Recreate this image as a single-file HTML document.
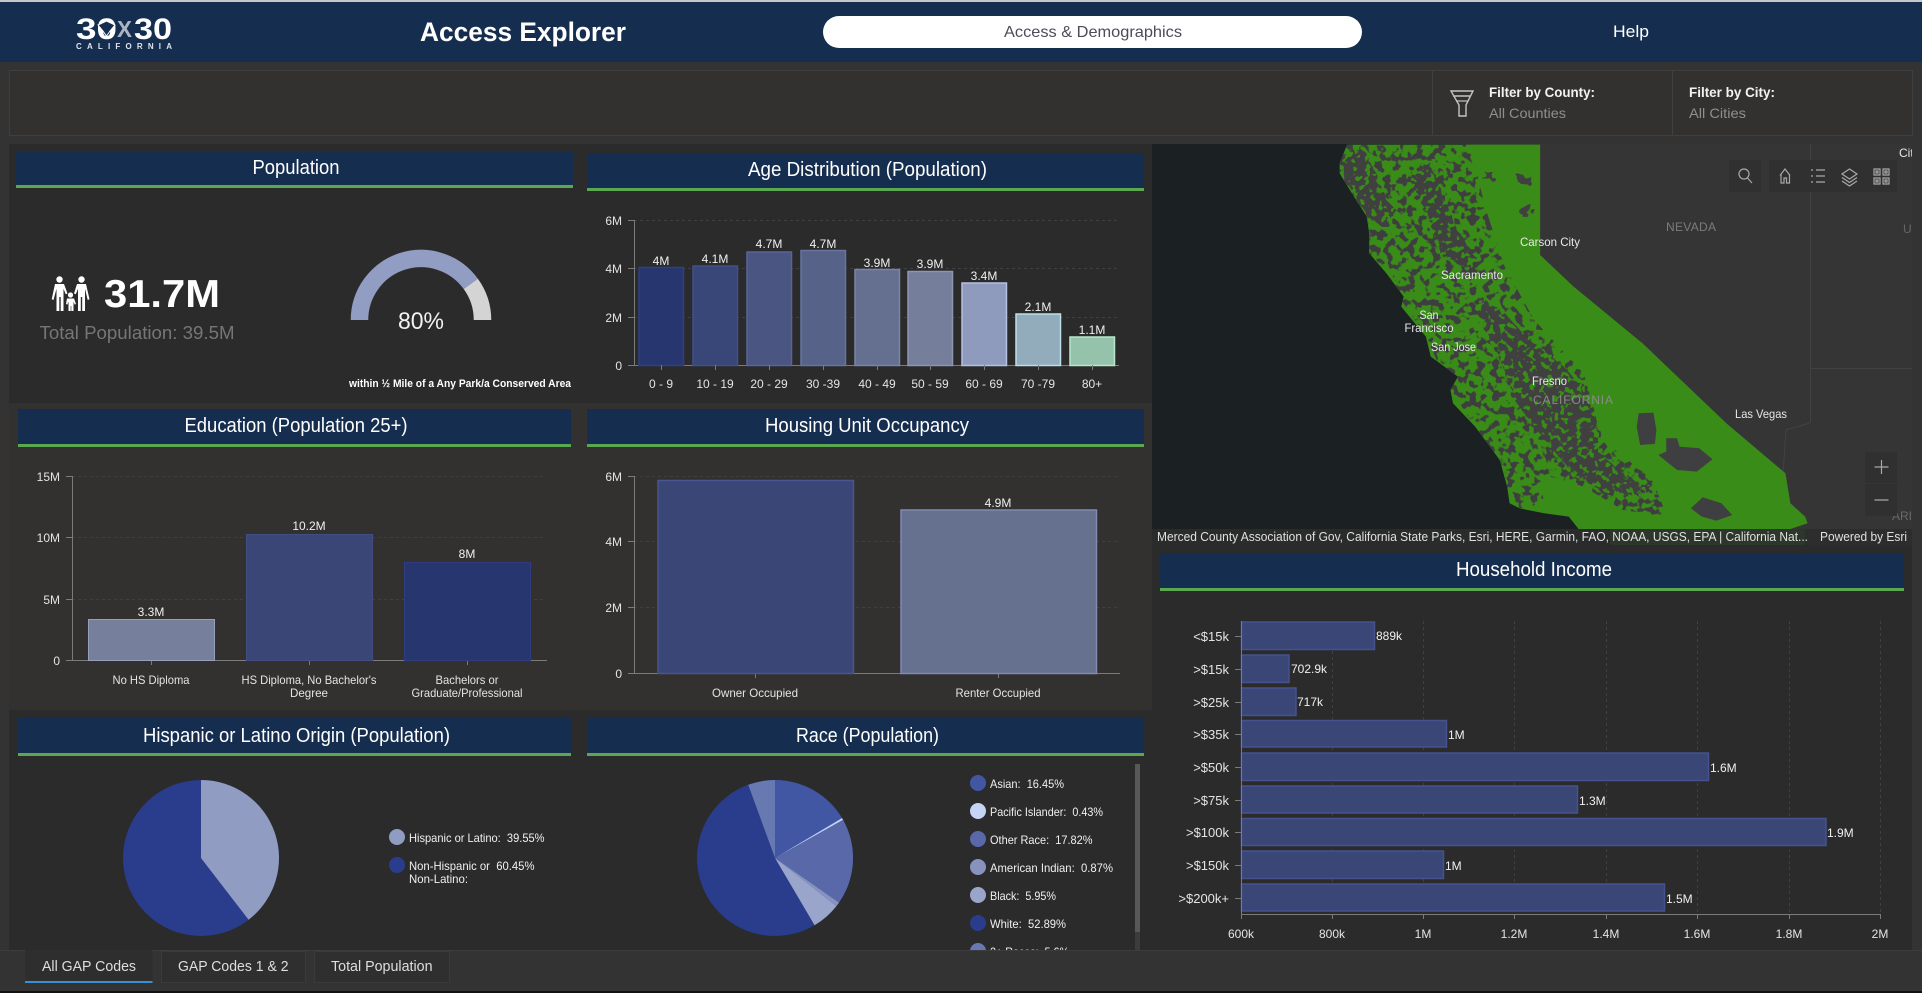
<!DOCTYPE html>
<html lang="en"><head><meta charset="utf-8"><title>Access Explorer</title>
<style>
html,body{margin:0;padding:0;background:#333;width:1922px;height:993px;overflow:hidden}
svg{display:block}
text{font-family:"Liberation Sans",sans-serif;fill:#eee}
.ttl{font-size:20px;fill:#fff;text-anchor:middle}
.v{font-size:12px;text-anchor:middle;fill:#f0f0f0}
.a{font-size:12px;text-anchor:end;fill:#e4e4e4}
.x{font-size:12px;text-anchor:middle;fill:#e4e4e4}
.lg{font-size:12px;fill:#f0f0f0}
.ml{font-size:12px;fill:#e8e8e8}
.g{stroke:#404040;stroke-width:1;stroke-dasharray:3 3;fill:none}
.ax{stroke:#7b7b7b;stroke-width:1;fill:none}
.ic{stroke:#a8a8a8;stroke-width:1.2;fill:none}
.tab{font-size:14.5px;fill:#dedede}
</style></head><body>
<svg xmlns="http://www.w3.org/2000/svg" width="1922" height="993" viewBox="0 0 1922 993">
<defs>
<filter id="sp" x="0" y="0" width="100%" height="100%" color-interpolation-filters="sRGB">
<feTurbulence type="fractalNoise" baseFrequency=".13" numOctaves="2" seed="7"/>
<feColorMatrix values="0 0 0 0 .243 0 0 0 0 .243 0 0 0 0 .25 14 0 0 0 -7.200"/>
</filter>
<filter id="gs" x="0" y="0" width="100%" height="100%" color-interpolation-filters="sRGB">
<feTurbulence type="fractalNoise" baseFrequency=".17" numOctaves="2" seed="11"/>
<feColorMatrix values="0 0 0 0 .227 0 0 0 0 .549 0 0 0 0 .094 14 0 0 0 -7.800"/>
</filter>
<filter id="dp" x="-5%" y="-5%" width="110%" height="110%">
<feTurbulence type="fractalNoise" baseFrequency=".14" numOctaves="2" seed="3" result="n"/>
<feDisplacementMap in="SourceGraphic" in2="n" scale="12"/>
</filter>
<clipPath id="ca"><polygon transform="translate(1150 140) scale(.4926 .3333)" points="400,14 792,14 792,345 860,440 1000,610 1170,850 1290,1000 1300,1090 1330,1130 1335,1150 1300,1167 870,1167 850,1130 800,1120 750,1105 730,1090 725,1040 710,960 660,860 615,790 610,750 625,710 570,650 560,590 510,500 515,470 480,400 445,340 445,280 440,230 410,160 385,100 385,70"/></clipPath>
<clipPath id="spk"><polygon transform="translate(1150 140) scale(.4926 .3333)" points="385,14 650,14 680,200 720,380 780,540 880,700 920,900 1020,1020 1050,1130 960,1110 880,1040 790,1000 800,1090 750,1105 725,1040 660,860 610,750 560,590 510,480 445,340 385,100"/></clipPath>
<clipPath id="dense">
<polygon transform="translate(1150 140) scale(.4926 .3333)" points="525,60 590,50 630,260 670,360 640,390 590,350 560,240 535,170"/>
<polygon transform="translate(1150 140) scale(.4926 .3333)" points="670,470 730,510 780,600 850,680 890,750 920,860 915,930 970,1000 1020,1040 1010,1070 920,1070 850,1000 790,900 730,780 700,660 660,530"/>
<polygon transform="translate(1150 140) scale(.4926 .3333)" points="385,70 430,10 455,60 490,180 510,210 470,270 430,230 390,130"/>
</clipPath>
<clipPath id="raceclip"><rect x="960" y="764" width="170" height="186"/></clipPath>
</defs>

<rect width="1922" height="993" fill="#333"/>
<!-- header -->
<rect width="1922" height="2" fill="#c8c8c8"/>
<rect y="2" width="1922" height="60" fill="#152e50"/>
<text x="76" y="39" font-size="30" font-weight="700" style="fill:#fff" textLength="41" lengthAdjust="spacingAndGlyphs">30</text>
<path d="M98 25 L106.500 21 L115 25 L110 31 L106.500 36 L103 31Z" fill="#152e50" stroke="#fff" stroke-width="1"/>
<text x="117" y="37" font-size="23" font-weight="700" style="fill:#aab4c2" textLength="15" lengthAdjust="spacingAndGlyphs">X</text>
<text x="134" y="39" font-size="30" font-weight="700" style="fill:#fff" textLength="38" lengthAdjust="spacingAndGlyphs">30</text>
<text x="76" y="49" font-size="8" font-weight="700" style="fill:#dfe4ea" textLength="96">CALIFORNIA</text>
<text x="420" y="41" font-size="27" font-weight="700" style="fill:#fff" textLength="206" lengthAdjust="spacingAndGlyphs">Access Explorer</text>
<rect x="823" y="16" width="539" height="32" rx="16" fill="#fff"/>
<text x="1004" y="37" font-size="16" style="fill:#4c4c5a" textLength="178" lengthAdjust="spacingAndGlyphs">Access &amp; Demographics</text>
<text x="1613" y="37" font-size="16.500" style="fill:#fff" textLength="36" lengthAdjust="spacingAndGlyphs">Help</text>

<!-- filter bar -->
<rect x="9.500" y="70.500" width="1903" height="65" fill="#323130" stroke="#3f3f3f"/>
<path d="M1432.500 71V135M1672.500 71V135" stroke="#404040"/>
<path d="M1451 91H1473L1466 105V116H1459V105ZM1453 96H1471" fill="none" stroke="#c4c4c4" stroke-width="1.400"/>
<path d="M1456 101H1468" stroke="#c4c4c4" stroke-width="1.200"/>
<text x="1489" y="97" font-size="14" font-weight="700" style="fill:#f2f2f2" textLength="106" lengthAdjust="spacingAndGlyphs">Filter by County:</text>
<text x="1489" y="118" font-size="14" style="fill:#8f8f8f" textLength="77" lengthAdjust="spacingAndGlyphs">All Counties</text>
<text x="1689" y="97" font-size="14" font-weight="700" style="fill:#f2f2f2" textLength="86" lengthAdjust="spacingAndGlyphs">Filter by City:</text>
<text x="1689" y="118" font-size="14" style="fill:#8f8f8f" textLength="57" lengthAdjust="spacingAndGlyphs">All Cities</text>

<!-- panels -->
<rect x="9" y="144" width="1143" height="259" fill="#2b2b2b"/>
<rect x="9" y="403" width="1143" height="307" fill="#323130"/>
<rect x="9" y="710" width="1143" height="240" fill="#2b2b2b"/>
<rect x="1152" y="545" width="760" height="405" fill="#2b2b2b"/>

<!-- Population -->
<rect x="16" y="151" width="557" height="34" fill="#152e50"/><rect x="16" y="185" width="557" height="3" fill="#5aa850"/>
<text class="ttl" x="296" y="174" textLength="87" lengthAdjust="spacingAndGlyphs">Population</text>
<g fill="#fff">
<circle cx="59.500" cy="279.500" r="3.200"/><circle cx="81.500" cy="279.500" r="3.200"/><circle cx="70.500" cy="295" r="2.600"/>
<path d="M55 284h9l3.500 9.500-1.800.8-2.200-5.500V311h-2.800V297h-1.400v14h-2.800V288.800L53.500 300l-1.800-.8Z"/>
<path d="M77 284h9l3.500 15.200-1.800.8-2.700-11.200V311h-2.800V297h-1.400v14h-2.800V288.800l-2.200 5.500-1.800-.8Z"/>
<path d="M67 298.500h7l2 5.500-1.300.6-1.200-3V311h-2.200v-5h-.6v5h-2.200V301.600l-1.200 3-1.300-.6Z"/>
</g>
<text x="104" y="307" font-size="39" font-weight="700" style="fill:#fff" textLength="116" lengthAdjust="spacingAndGlyphs">31.7M</text>
<text x="39.500" y="339" font-size="18" style="fill:#767676" textLength="195" lengthAdjust="spacingAndGlyphs">Total Population: 39.5M</text>
<path d="M359.500 320A61.500 61.500 0 0 1 470.800 283.900" fill="none" stroke="#929dc4" stroke-width="17.500"/>
<path d="M470.800 283.900A61.500 61.500 0 0 1 482.500 320" fill="none" stroke="#d4d4d4" stroke-width="17.500"/>
<text x="398" y="329" font-size="24" style="fill:#f2f2f2" textLength="46" lengthAdjust="spacingAndGlyphs">80%</text>
<text x="349" y="387" font-size="11" font-weight="700" style="fill:#fff" textLength="222" lengthAdjust="spacingAndGlyphs">within ½ Mile of a Any Park/a Conserved Area</text>

<!-- Age -->
<rect x="587" y="153" width="557" height="35" fill="#152e50"/><rect x="587" y="188" width="557" height="3" fill="#5aa850"/>
<text class="ttl" x="867.500" y="176" textLength="239" lengthAdjust="spacingAndGlyphs">Age Distribution (Population)</text>
<path class="g" d="M634 220.500H1119M634 268.500H1119M634 317.500H1119"/>
<path class="ax" d="M634.500 220V365M628 220.500H634.500M628 268.500H634.500M628 317.500H634.500M628 365.500H1119"/>
<g stroke-width="1.500">
<rect x="639" y="267.500" width="44.500" height="98" fill="#28366f" stroke="#303f80"/>
<rect x="693" y="266" width="44.500" height="99.500" fill="#394678" stroke="#43508a"/>
<rect x="747" y="252" width="44.500" height="113.500" fill="#4a5581" stroke="#596597"/>
<rect x="801" y="250.500" width="44.500" height="115" fill="#566288" stroke="#68749f"/>
<rect x="855" y="269.500" width="44.500" height="96" fill="#656f90" stroke="#7a84a8"/>
<rect x="908" y="271.500" width="44.500" height="94" fill="#757e9a" stroke="#8c95b2"/>
<rect x="962" y="283" width="44.500" height="82.500" fill="#8f9bbd" stroke="#b5c0e2"/>
<rect x="1016" y="314" width="44.500" height="51.500" fill="#92acbc" stroke="#bcdeea"/>
<rect x="1070" y="337" width="44.500" height="28.500" fill="#95c2ab" stroke="#b6e8cf"/>
</g>
<path class="ax" d="M661.500 365v5M715.500 365v5M769.500 365v5M823.500 365v5M877.500 365v5M930.500 365v5M984.500 365v5M1038.500 365v5M1092.500 365v5"/>
<g>
<text class="a" x="622" y="225">6M</text><text class="a" x="622" y="273">4M</text><text class="a" x="622" y="322">2M</text><text class="a" x="622" y="370">0</text>
<text class="v" x="661" y="265">4M</text><text class="v" x="715" y="263">4.1M</text><text class="v" x="769" y="248">4.7M</text><text class="v" x="823" y="248">4.7M</text><text class="v" x="877" y="267">3.9M</text><text class="v" x="930" y="268">3.9M</text><text class="v" x="984" y="280">3.4M</text><text class="v" x="1038" y="311">2.1M</text><text class="v" x="1092" y="334">1.1M</text>
<text class="x" x="661" y="388">0 - 9</text><text class="x" x="715" y="388">10 - 19</text><text class="x" x="769" y="388">20 - 29</text><text class="x" x="823" y="388">30 -39</text><text class="x" x="877" y="388">40 - 49</text><text class="x" x="930" y="388">50 - 59</text><text class="x" x="984" y="388">60 - 69</text><text class="x" x="1038" y="388">70 -79</text><text class="x" x="1092" y="388">80+</text>
</g>

<!-- Education -->
<rect x="18" y="409" width="553" height="35" fill="#152e50"/><rect x="18" y="444" width="553" height="3" fill="#5aa850"/>
<text class="ttl" x="296" y="432" textLength="223" lengthAdjust="spacingAndGlyphs">Education (Population 25+)</text>
<path class="g" d="M72 476.500H545M72 537.500H545M72 599.500H545"/>
<path class="ax" d="M72.500 476V660M66 476.500H72.500M66 537.500H72.500M66 599.500H72.500M66 660.500H547M151.500 660v5M309.500 660v5M467.500 660v5"/>
<rect x="88.500" y="619.500" width="126" height="41" fill="#767f9b" stroke="#969fbb"/>
<rect x="246.500" y="534.500" width="126" height="126" fill="#3a4676" stroke="#414e84"/>
<rect x="404.500" y="562.500" width="126" height="98" fill="#28366f" stroke="#2f3d7e"/>
<text class="a" x="60" y="481">15M</text><text class="a" x="60" y="542">10M</text><text class="a" x="60" y="604">5M</text><text class="a" x="60" y="665">0</text>
<text class="v" x="151" y="616">3.3M</text><text class="v" x="309" y="530">10.2M</text><text class="v" x="467" y="558">8M</text>
<text class="x" x="151" y="684" textLength="77" lengthAdjust="spacingAndGlyphs">No HS Diploma</text>
<text class="x" x="309" y="684" textLength="135" lengthAdjust="spacingAndGlyphs">HS Diploma, No Bachelor's</text>
<text class="x" x="309" y="697" textLength="38" lengthAdjust="spacingAndGlyphs">Degree</text>
<text class="x" x="467" y="684" textLength="63" lengthAdjust="spacingAndGlyphs">Bachelors or</text>
<text class="x" x="467" y="697" textLength="111" lengthAdjust="spacingAndGlyphs">Graduate/Professional</text>

<!-- Housing -->
<rect x="587" y="409" width="557" height="35" fill="#152e50"/><rect x="587" y="444" width="557" height="3" fill="#5aa850"/>
<text class="ttl" x="867" y="432" textLength="204" lengthAdjust="spacingAndGlyphs">Housing Unit Occupancy</text>
<path class="g" d="M634 476.500H1119M634 541.500H1119M634 607.500H1119"/>
<path class="ax" d="M634.500 476V673M628 476.500H634.500M628 541.500H634.500M628 607.500H634.500M628 673.500H1120M755.500 673v5M998.500 673v5"/>
<rect x="658" y="480.500" width="195.500" height="193" fill="#3a4676" stroke="#48558f" stroke-width="1.500"/>
<rect x="901" y="510" width="195.500" height="163.500" fill="#66708f" stroke="#808bb2" stroke-width="1.500"/>
<text class="a" x="622" y="481">6M</text><text class="a" x="622" y="546">4M</text><text class="a" x="622" y="612">2M</text><text class="a" x="622" y="678">0</text>
<text class="v" x="998" y="507">4.9M</text>
<text class="x" x="755" y="697" textLength="86" lengthAdjust="spacingAndGlyphs">Owner Occupied</text>
<text class="x" x="998" y="697" textLength="85" lengthAdjust="spacingAndGlyphs">Renter Occupied</text>

<!-- Hispanic -->
<rect x="18" y="718" width="553" height="35" fill="#152e50"/><rect x="18" y="753" width="553" height="3" fill="#5aa850"/>
<text class="ttl" x="296.500" y="742" textLength="307" lengthAdjust="spacingAndGlyphs">Hispanic or Latino Origin (Population)</text>
<circle cx="201" cy="858" r="78" fill="#2a3d8c"/>
<path d="M201 858V780A78 78 0 0 1 248.600 919.800Z" fill="#919cc2"/>
<circle cx="397" cy="837" r="8" fill="#919cc2"/><circle cx="397" cy="865" r="8" fill="#2a3d8c"/>
<text class="lg" x="409" y="842" textLength="135.500" lengthAdjust="spacingAndGlyphs" xml:space="preserve">Hispanic or Latino:  39.55%</text>
<text class="lg" x="409" y="870" textLength="125.500" lengthAdjust="spacingAndGlyphs" xml:space="preserve">Non-Hispanic or  60.45%</text>
<text class="lg" x="409" y="883" textLength="59" lengthAdjust="spacingAndGlyphs">Non-Latino:</text>

<!-- Race -->
<rect x="587" y="718" width="557" height="35" fill="#152e50"/><rect x="587" y="753" width="557" height="3" fill="#5aa850"/>
<text class="ttl" x="867.500" y="742" textLength="143" lengthAdjust="spacingAndGlyphs">Race (Population)</text>
<circle cx="775" cy="858" r="78" fill="#2a3d8c"/>
<path d="M775 858V780A78 78 0 0 1 842 818.100Z" fill="#4257a4"/>
<path d="M775 858L842 818.100A78 78 0 0 1 843.100 819.900Z" fill="#c5d3f5"/>
<path d="M775 858L843.100 819.900A78 78 0 0 1 839 902.600Z" fill="#5868a8"/>
<path d="M775 858L839 902.600A78 78 0 0 1 836.400 906.100Z" fill="#8792bf"/>
<path d="M775 858L836.400 906.100A78 78 0 0 1 814.600 925.200Z" fill="#9aa5cc"/>
<path d="M775 858L748.200 784.800A78 78 0 0 1 775 780Z" fill="#6878b0"/>
<g clip-path="url(#raceclip)">
<circle cx="978" cy="783" r="8" fill="#4257a4"/><circle cx="978" cy="811" r="8" fill="#c5d3f5"/><circle cx="978" cy="839" r="8" fill="#5868a8"/><circle cx="978" cy="867" r="8" fill="#8792bf"/><circle cx="978" cy="895" r="8" fill="#9aa5cc"/><circle cx="978" cy="923" r="8" fill="#2a3d8c"/><circle cx="978" cy="951" r="8" fill="#6878b0"/>
<text class="lg" x="990" y="788" textLength="74" lengthAdjust="spacingAndGlyphs" xml:space="preserve">Asian:  16.45%</text>
<text class="lg" x="990" y="816" textLength="113" lengthAdjust="spacingAndGlyphs" xml:space="preserve">Pacific Islander:  0.43%</text>
<text class="lg" x="990" y="844" textLength="102.500" lengthAdjust="spacingAndGlyphs" xml:space="preserve">Other Race:  17.82%</text>
<text class="lg" x="990" y="872" textLength="123" lengthAdjust="spacingAndGlyphs" xml:space="preserve">American Indian:  0.87%</text>
<text class="lg" x="990" y="900" textLength="66" lengthAdjust="spacingAndGlyphs" xml:space="preserve">Black:  5.95%</text>
<text class="lg" x="990" y="928" textLength="76" lengthAdjust="spacingAndGlyphs" xml:space="preserve">White:  52.89%</text>
<text class="lg" x="990" y="956" textLength="79" lengthAdjust="spacingAndGlyphs" xml:space="preserve">2+ Races:  5.6%</text>
</g>
<rect x="1135" y="764" width="5" height="186" fill="#3c3c3c"/><rect x="1135" y="764" width="5" height="168" fill="#585858"/>

<!-- Map -->
<svg x="1152" y="144" width="760" height="401" viewBox="1152 144 760 401">
<rect x="1152" y="144" width="760" height="401" fill="#1b2023"/>
<polygon transform="translate(1150 140) scale(.4926 .3333)" fill="#353535" points="640,0 1560,0 1560,1220 1000,1220 900,900 700,400"/>
<path d="M1810.500 144V423M1810 368.500H1912M1810 423L1786 430L1783 473" fill="none" stroke="#424242" stroke-width="1"/>
<polygon fill="#3a8c18" transform="translate(1150 140) scale(.4926 .3333)" points="400,14 792,14 792,345 860,440 1000,610 1170,850 1290,1000 1300,1090 1330,1130 1335,1150 1300,1167 870,1167 850,1130 800,1120 750,1105 730,1090 725,1040 710,960 660,860 615,790 610,750 625,710 570,650 560,590 510,500 515,470 480,400 445,340 445,280 440,230 410,160 385,100 385,70"/>
<g clip-path="url(#ca)">
<rect x="1152" y="144" width="760" height="385" filter="url(#sp)" clip-path="url(#spk)"/>
<g filter="url(#dp)"><g transform="translate(1150 140) scale(.4926 .3333)" fill="#3f3f41">
<polygon points="530,100 570,70 590,150 620,260 660,350 640,380 590,340 570,240 545,170"/>
<polygon points="680,480 720,520 770,600 840,680 880,750 910,860 905,930 960,1000 1010,1040 1000,1060 920,1060 860,1000 800,900 740,780 710,660 670,530"/>
<polygon points="390,70 430,20 445,60 480,180 500,210 470,260 440,230 400,130"/>
<polygon points="680,95 700,100 695,120 675,115"/><polygon points="745,105 780,120 770,135 745,125"/><polygon points="755,200 775,195 765,230 752,225"/>
</g></g>
<rect x="1152" y="144" width="760" height="385" filter="url(#gs)" clip-path="url(#dense)"/>
<g transform="translate(1150 140) scale(.4926 .3333)" fill="#3f3f41">
<polygon points="992,820 1022,818 1028,870 1025,912 995,915 988,860"/>
<polygon points="1048,895 1070,895 1075,920 1115,925 1142,958 1110,995 1070,990 1032,945 1048,935"/>
<polygon points="1122,1072 1160,1090 1182,1125 1150,1142 1120,1130 1098,1105"/>
</g>
</g>
<rect x="1610" y="529" width="195" height="16" fill="#3a8c18"/>
<rect x="1152" y="529" width="760" height="16" fill="#2c2c2c" opacity=".9"/>
<g>
<text class="ml" x="1520" y="246" textLength="60" lengthAdjust="spacingAndGlyphs">Carson City</text>
<text class="ml" x="1441" y="279" textLength="62" lengthAdjust="spacingAndGlyphs">Sacramento</text>
<text class="ml" x="1429" y="319" text-anchor="middle" textLength="19" lengthAdjust="spacingAndGlyphs">San</text>
<text class="ml" x="1429" y="332" text-anchor="middle" textLength="49" lengthAdjust="spacingAndGlyphs">Francisco</text>
<text class="ml" x="1431" y="351" textLength="45" lengthAdjust="spacingAndGlyphs">San Jose</text>
<text class="ml" x="1532" y="385" textLength="35" lengthAdjust="spacingAndGlyphs">Fresno</text>
<text class="ml" x="1533" y="404" textLength="80" style="fill:#8a8a8a">CALIFORNIA</text>
<text class="ml" x="1666" y="231" textLength="50" style="fill:#7c7c7c">NEVADA</text>
<text class="ml" x="1735" y="418" textLength="52" lengthAdjust="spacingAndGlyphs">Las Vegas</text>
<text class="ml" x="1899" y="157">Cit</text>
<text class="ml" x="1903" y="233" style="fill:#666">U</text>
<text class="ml" x="1892" y="520" style="fill:#6a6a6a">ARI</text>
</g>
<rect x="1729" y="160" width="32" height="32" fill="#303030"/>
<rect x="1769" y="160" width="128" height="32" fill="#303030"/>
<circle class="ic" cx="1744" cy="174" r="5"/><path class="ic" d="M1747.500 178L1752 183"/>
<path class="ic" d="M1780 175.500L1785 169L1790 175.500M1781 174V183H1784V178H1786.500V183H1789.500V174"/>
<path class="ic" d="M1811 170h2M1811 176h2M1811 182h2M1816 170h9M1816 176h9M1816 182h9"/>
<path class="ic" d="M1849.500 169L1857 174L1849.500 179L1842 174ZM1842 177.500L1849.500 182.500L1857 177.500M1842 181L1849.500 186L1857 181"/>
<path class="ic" d="M1874 169h6v6h-6ZM1883 169h6v6h-6ZM1874 178h6v6h-6ZM1883 178h6v6h-6ZM1876 171h2v2h-2ZM1885 171h2v2h-2ZM1876 180h2v2h-2ZM1885 180h2v2h-2Z"/>
<rect x="1865" y="452" width="32" height="31" fill="#303030"/><rect x="1865" y="484" width="32" height="32" fill="#303030"/>
<path class="ic" d="M1881.500 460V474M1874.500 467H1888.500M1874.500 500H1888.500" stroke-width="1.400"/>
<text x="1157" y="541" font-size="13" style="fill:#e0e0e0" textLength="651" lengthAdjust="spacingAndGlyphs">Merced County Association of Gov, California State Parks, Esri, HERE, Garmin, FAO, NOAA, USGS, EPA | California Nat...</text>
<text x="1820" y="541" font-size="13" style="fill:#e0e0e0" textLength="87" lengthAdjust="spacingAndGlyphs">Powered by Esri</text>
</svg>

<!-- Household -->
<rect x="1160" y="553" width="744" height="35" fill="#152e50"/><rect x="1160" y="588" width="744" height="3" fill="#5aa850"/>
<text class="ttl" x="1534" y="576" textLength="156" lengthAdjust="spacingAndGlyphs">Household Income</text>
<path class="g" d="M1332.500 621V914M1423.500 621V914M1514.500 621V914M1606.500 621V914M1697.500 621V914M1789.500 621V914M1880.500 621V914"/>
<g fill="#3a4676" stroke="#45528e" stroke-width="1.500">
<rect x="1241.500" y="622" width="133" height="27.500"/>
<rect x="1241.500" y="655" width="47.500" height="27.500"/>
<rect x="1241.500" y="688" width="54.500" height="27.500"/>
<rect x="1241.500" y="720.500" width="205" height="26.500"/>
<rect x="1241.500" y="753" width="467" height="27.500"/>
<rect x="1241.500" y="786" width="336" height="27"/>
<rect x="1241.500" y="818.500" width="584.500" height="27"/>
<rect x="1241.500" y="851" width="202" height="27.500"/>
<rect x="1241.500" y="884" width="423" height="27"/>
</g>
<path class="ax" d="M1241.500 621V914M1241 914.500H1880M1332.500 914v5M1423.500 914v5M1514.500 914v5M1606.500 914v5M1697.500 914v5M1789.500 914v5M1880.500 914v5M1241.500 914v5M1235 636.500h6M1235 669.500h6M1235 702.500h6M1235 734.500h6M1235 767.500h6M1235 800.500h6M1235 832.500h6M1235 865.500h6M1235 898.500h6"/>
<g>
<text class="a" x="1229" y="641" style="font-size:13px">&lt;$15k</text>
<text class="a" x="1229" y="674" style="font-size:13px">&gt;$15k</text>
<text class="a" x="1229" y="707" style="font-size:13px">&gt;$25k</text>
<text class="a" x="1229" y="739" style="font-size:13px">&gt;$35k</text>
<text class="a" x="1229" y="772" style="font-size:13px">&gt;$50k</text>
<text class="a" x="1229" y="805" style="font-size:13px">&gt;$75k</text>
<text class="a" x="1229" y="837" style="font-size:13px">&gt;$100k</text>
<text class="a" x="1229" y="870" style="font-size:13px">&gt;$150k</text>
<text class="a" x="1229" y="903" style="font-size:13px">&gt;$200k+</text>
</g>
<g>
<text class="lg" x="1376" y="640">889k</text><text class="lg" x="1291" y="673">702.9k</text><text class="lg" x="1297" y="706">717k</text><text class="lg" x="1448" y="739">1M</text><text class="lg" x="1710" y="772">1.6M</text><text class="lg" x="1579" y="805">1.3M</text><text class="lg" x="1827" y="837">1.9M</text><text class="lg" x="1445" y="870">1M</text><text class="lg" x="1666" y="903">1.5M</text>
<text class="x" x="1241" y="938">600k</text><text class="x" x="1332" y="938">800k</text><text class="x" x="1423" y="938">1M</text><text class="x" x="1514" y="938">1.2M</text><text class="x" x="1606" y="938">1.4M</text><text class="x" x="1697" y="938">1.6M</text><text class="x" x="1789" y="938">1.8M</text><text class="x" x="1880" y="938">2M</text>
</g>

<!-- Tabs -->
<rect x="0" y="950" width="1922" height="41" fill="#333"/>
<path d="M0 950.500H1922" stroke="#3d3d3d"/>
<rect x="0" y="991" width="1922" height="2" fill="#111"/>
<rect x="25" y="950" width="127.500" height="33" fill="#2e2e2e"/>
<rect x="25" y="981" width="127.500" height="2" fill="#3b8fd4"/>
<rect x="161.500" y="951.500" width="144" height="31" fill="#2f2f2f" stroke="#3a3a3a"/>
<rect x="314.500" y="951.500" width="135" height="31" fill="#2f2f2f" stroke="#3a3a3a"/>
<text class="tab" x="42" y="971" textLength="94" lengthAdjust="spacingAndGlyphs">All GAP Codes</text>
<text class="tab" x="178" y="971" textLength="110.500" lengthAdjust="spacingAndGlyphs">GAP Codes 1 &amp; 2</text>
<text class="tab" x="331" y="971" textLength="101.500" lengthAdjust="spacingAndGlyphs">Total Population</text>
</svg>
</body></html>
